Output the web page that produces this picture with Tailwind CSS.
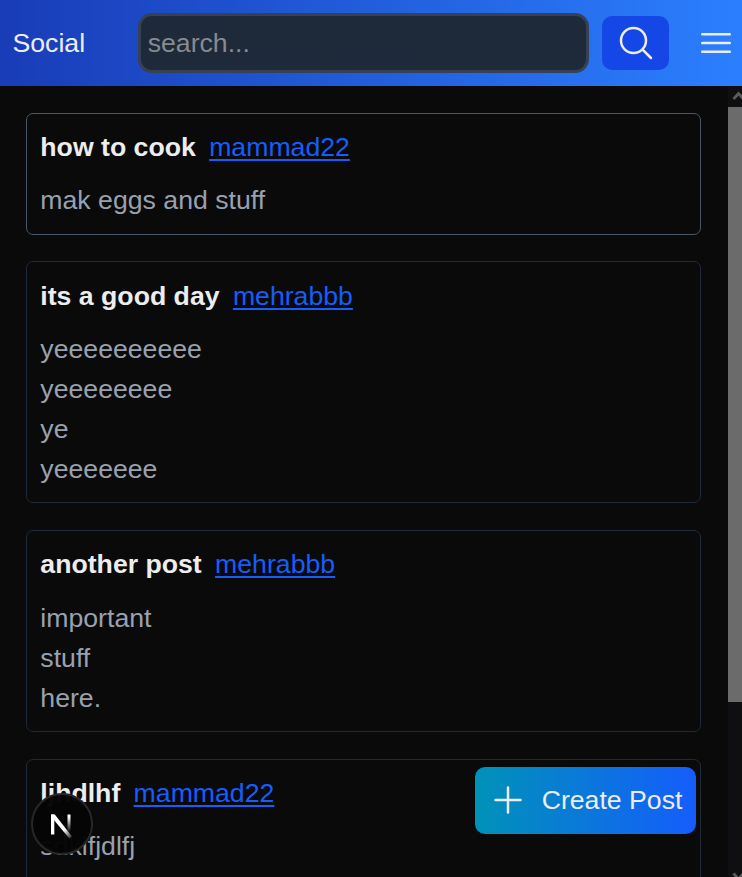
<!DOCTYPE html>
<html lang="en">
<head>
<meta charset="utf-8">
<title>Social</title>
<script src="https://cdn.jsdelivr.net/npm/@tailwindcss/browser@4"></script>
</head>
<body class="h-[877px] overflow-hidden bg-[#0a0a0a] font-['Liberation_Sans',Arial,sans-serif] text-[26.67px] leading-[40px] text-[#ededed]">
<div class="flex h-full flex-col">
  <header class="flex h-[86px] shrink-0 items-center bg-linear-to-r/srgb from-[#193cb8] to-[#2b7fff] pr-[6px] pl-[12.5px]">
    <a class="w-[125.5px]">Social</a>
    <input type="text" placeholder="search..." class="h-[60px] w-[451px] rounded-[14px] border-[3px] border-gray-700 bg-gray-800 px-[6.67px] placeholder:text-[#868b91]">
    <button class="ml-[13px] flex h-[54px] w-[67px] items-center justify-center rounded-[10px] bg-[#1447e6]" aria-label="Search">
      <svg class="size-10" viewBox="0 0 24 24" fill="none" stroke="currentColor" stroke-width="1.5" stroke-linecap="round" stroke-linejoin="round"><path d="m21 21-5.197-5.197m0 0A7.5 7.5 0 1 0 5.196 5.196a7.5 7.5 0 0 0 10.607 10.607Z"/></svg>
    </button>
    <button class="ml-auto" aria-label="Menu">
      <svg class="size-10" viewBox="0 0 24 24" fill="none" stroke="currentColor" stroke-width="1.5" stroke-linecap="round" stroke-linejoin="round"><path d="M3.75 6.75h16.5M3.75 12h16.5m-16.5 5.25h16.5"/></svg>
    </button>
  </header>
  <div class="flex min-h-0 flex-1">
    <main class="flex min-w-0 flex-1 flex-col gap-[26.67px] overflow-hidden pt-[26.67px] pr-[27px] pl-[26px]">
      <article class="flex shrink-0 flex-col gap-[13.33px] rounded-[7px] border border-gray-600 p-[13.33px]">
        <div class="flex gap-[13.33px]"><h2 class="font-bold">how to cook</h2><a class="text-[#155dfc] underline decoration-2 underline-offset-[3px]">mammad22</a></div>
        <p class="text-gray-400">mak eggs and stuff</p>
      </article>
      <article class="flex shrink-0 flex-col gap-[13.33px] rounded-[7px] border border-gray-800 p-[13.33px]">
        <div class="flex gap-[13.33px]"><h2 class="font-bold">its a good day</h2><a class="text-[#155dfc] underline decoration-2 underline-offset-[3px]">mehrabbb</a></div>
        <p class="text-gray-400">yeeeeeeeeee<br>yeeeeeeee<br>ye<br>yeeeeeee</p>
      </article>
      <article class="flex shrink-0 flex-col gap-[13.33px] rounded-[7px] border border-gray-800 p-[13.33px]">
        <div class="flex gap-[13.33px]"><h2 class="font-bold">another post</h2><a class="text-[#155dfc] underline decoration-2 underline-offset-[3px]">mehrabbb</a></div>
        <p class="text-gray-400">important<br>stuff<br>here.</p>
      </article>
      <article class="flex shrink-0 flex-col gap-[13.33px] rounded-[7px] border border-gray-800 p-[13.33px]">
        <div class="flex gap-[13.33px]"><h2 class="font-bold">ljhdlhf</h2><a class="text-[#155dfc] underline decoration-2 underline-offset-[3px]">mammad22</a></div>
        <p class="text-gray-400">sdklfjdlfj</p>
        <p class="h-10"></p>
      </article>
    </main>
    <!-- Scrollbar -->
    <div class="flex w-[14px] shrink-0 flex-col overflow-hidden bg-[#0f0f11]">
      <svg class="h-[21px] w-[20px] shrink-0" viewBox="0 0 20 21" fill="none" stroke="#5c5c5c" stroke-width="2.8"><path d="M5.5 13 10.5 7.5 15.5 13"/></svg>
      <div class="h-[595px] bg-[#6b6b6b]"></div>
      <svg class="mt-auto h-[10px] w-[20px] shrink-0" viewBox="0 0 20 10" fill="none" stroke="#5c5c5c" stroke-width="2.8"><path d="M5.5 6.5 10.5 12 15.5 6.5"/></svg>
    </div>
  </div>
</div>
<button class="fixed top-[767px] left-[475px] flex h-[67px] w-[221px] items-center gap-[13.33px] rounded-[10px] bg-linear-to-r/srgb from-[#0092b8] to-[#155dfc] pb-px pl-[13.33px] whitespace-nowrap">
  <svg class="size-10 shrink-0" viewBox="0 0 24 24" fill="none" stroke="currentColor" stroke-width="1.5" stroke-linecap="round" stroke-linejoin="round"><path d="M12 4.5v15m7.5-7.5h-15"/></svg>
  <span>Create Post</span>
</button>
<!-- Development indicator -->
<div class="fixed top-[793px] left-[31px] flex size-[62px] items-center justify-center rounded-full border-[2.5px] border-[#282828] bg-[#050505]/98">
  <svg class="size-[58px] shrink-0" viewBox="0 0 58 58" fill="none">
    <defs>
      <linearGradient id="stem" x1="0" y1="22" x2="0" y2="37" gradientUnits="userSpaceOnUse"><stop stop-color="#fff"/><stop offset="1" stop-color="#fff" stop-opacity="0"/></linearGradient>
      <linearGradient id="diag" x1="32" y1="34" x2="40" y2="44" gradientUnits="userSpaceOnUse"><stop stop-color="#fff"/><stop offset="1" stop-color="#fff" stop-opacity="0"/></linearGradient>
    </defs>
    <path d="M18 19.5h3.3v20H18z" fill="#fff"/>
    <path d="M34.5 19.5h3v18h-3z" fill="url(#stem)"/>
    <path d="M18 19.5h3.8L39 41.5l-2.7 2L18 21.5z" fill="url(#diag)"/>
  </svg>
</div>
</body>
</html>
